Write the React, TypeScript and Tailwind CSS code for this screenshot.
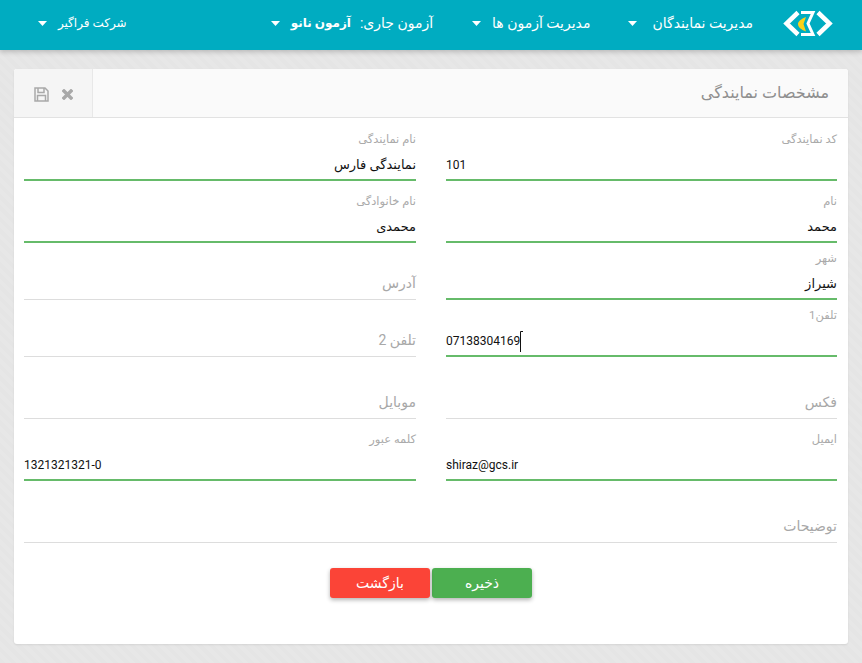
import React from "react";

const FONT = "font-['Roboto','DejaVu_Sans','Noto_Sans',sans-serif]";

function Caret() {
  return (
    <svg width="9" height="5" viewBox="0 0 9 5" className="shrink-0">
      <path d="M0 0H9L4.5 5Z" fill="#fff" />
    </svg>
  );
}

function Logo() {
  return (
    <svg width="50" height="27" viewBox="0 0 50 27" className="shrink-0" fill="none" stroke="#fff">
      <path d="M15 2.5 L3.5 13.5 L15 24.5" strokeWidth="4.5" />
      <path d="M18 2.5 H30 L25 13.5 L30 24.5 H18" strokeWidth="3" />
      <path d="M35 2.5 L46.5 13.5 L35 24.5" strokeWidth="4.5" />
      <path d="M23 7 C18 9 15 11.5 15 14 C15 17 18 19.5 23 21.5 L20.5 14 Z" fill="#fcd116" stroke="none" />
    </svg>
  );
}

function Cursor() {
  return (
    <svg width="4" height="21" viewBox="0 0 4 21" className="shrink-0">
      <path d="M0.5 21V0.5H3" fill="none" stroke="#111" strokeWidth="1" />
    </svg>
  );
}

function Field({
  label,
  value,
  placeholder,
  ltr,
  cursor,
  wide,
}: {
  label?: string;
  value?: string;
  placeholder?: string;
  ltr?: boolean;
  cursor?: boolean;
  wide?: boolean;
}) {
  const filled = value !== undefined;
  return (
    <div className={"flex flex-col justify-end " + (wide ? "col-span-2" : "")}>
      {label && <div className="text-[11.5px] leading-[14px] text-[#aaaaaa] mb-[7px]">{label}</div>}
      <div
        className={
          "h-[24px] flex items-center " +
          (filled ? "text-[13px] text-[#111111]" : "text-[14px] text-[#a8a8a8]")
        }
      >
        {ltr ? (
          <span dir="ltr" className="mr-auto flex items-center text-[12px] font-['Roboto',sans-serif]">
            {value}
            {cursor && <Cursor />}
          </span>
        ) : (
          <span>{value ?? placeholder}</span>
        )}
      </div>
      <div className={filled ? "h-[2px] mt-[2px] bg-[#66bb6a]" : "h-px mt-[4px] bg-[#dddddd]"} />
    </div>
  );
}

export default function App() {
  return (
    <div
      dir="rtl"
      className={
        "w-[862px] h-[663px] overflow-hidden bg-[repeating-linear-gradient(45deg,#e5e5e5_0px,#e5e5e5_4px,#e7e7e7_4px,#e7e7e7_8px)] " +
        FONT
      }
    >
      <header className="h-[50px] bg-[#00acc1] shadow-[0_2px_5px_rgba(0,0,0,0.2)] flex items-center pr-[29px] pb-[4px]">
        <Logo />
        <nav className="flex items-center mr-[30px] text-white whitespace-nowrap text-[14px]">
          <span>مدیریت نمایندگان</span>
          <span className="mr-[15px] flex"><Caret /></span>
          <span className="mr-[38px]">مدیریت آزمون ها</span>
          <span className="mr-[11px] flex"><Caret /></span>
          <span className="mr-[39px]">آزمون جاری:</span>
          <b className="mr-[9px] font-bold text-[12px]">آزمون نانو</b>
          <span className="mr-[11px] flex"><Caret /></span>
          <span className="mr-[144px] text-[12px]">شرکت فراگیر</span>
          <span className="mr-[11px] flex"><Caret /></span>
        </nav>
      </header>

      <main className="mx-[14px] mt-[19px] h-[575px] bg-white rounded-[3px] shadow-[0_1px_2px_rgba(0,0,0,0.08)] overflow-hidden">
        <div className="h-[49px] flex border-b border-[#e2e2e2] bg-[#fafafa]">
          <div className="flex-1 flex items-center pr-[19px] text-[16px] text-[#8f8f8f]">مشخصات نمایندگی</div>
          <div className="w-[79px] bg-[#f5f5f5] border-r border-[#e8e8e8] flex items-center justify-center gap-[13px] pt-[2px]">
            <svg width="11" height="11" viewBox="0 0 11 11" className="shrink-0">
              <path d="M2 2L9 9M9 2L2 9" stroke="#a9a9a9" strokeWidth="3.4" strokeLinecap="square" fill="none" />
            </svg>
            <svg width="15" height="15" viewBox="0 0 15 15" fill="none" stroke="#a9a9a9" strokeWidth="1.5" className="shrink-0">
              <path d="M1 1 H11 L14 4 V14 H1 Z" />
              <path d="M4 1 V5.5 H10 V1" />
              <path d="M3.5 14 V8.5 H11.5 V14" />
            </svg>
          </div>
        </div>

        <div className="pr-[11px] pl-[10px] grid grid-cols-[391px_392px] justify-between grid-rows-[63px_62px_57px_57px_62px_62px_62px]">
          <Field label="کد نمایندگی" value="101" ltr />
          <Field label="نام نمایندگی" value="نمایندگی فارس" />
          <Field label="نام" value="محمد" />
          <Field label="نام خانوادگی" value="محمدی" />
          <Field label="شهر" value="شیراز" />
          <Field placeholder="آدرس" />
          <Field label="تلفن1" value="07138304169" ltr cursor />
          <Field placeholder="تلفن 2" />
          <Field placeholder="فکس" />
          <Field placeholder="موبایل" />
          <Field label="ایمیل" value="shiraz@gcs.ir" ltr />
          <Field label="کلمه عبور" value="1321321321-0" ltr />
          <Field placeholder="توضیحات" wide />
        </div>

        <div className="mt-[25px] flex justify-center gap-[2px]">
          <button className="w-[100px] h-[30px] rounded-[3px] bg-[#4caf50] text-white text-[14px] shadow-[0_2px_4px_rgba(0,0,0,0.3)]">ذخیره</button>
          <button className="w-[100px] h-[30px] rounded-[3px] bg-[#fb4437] text-white text-[14px] shadow-[0_2px_4px_rgba(0,0,0,0.3)]">بازگشت</button>
        </div>
      </main>
    </div>
  );
}
